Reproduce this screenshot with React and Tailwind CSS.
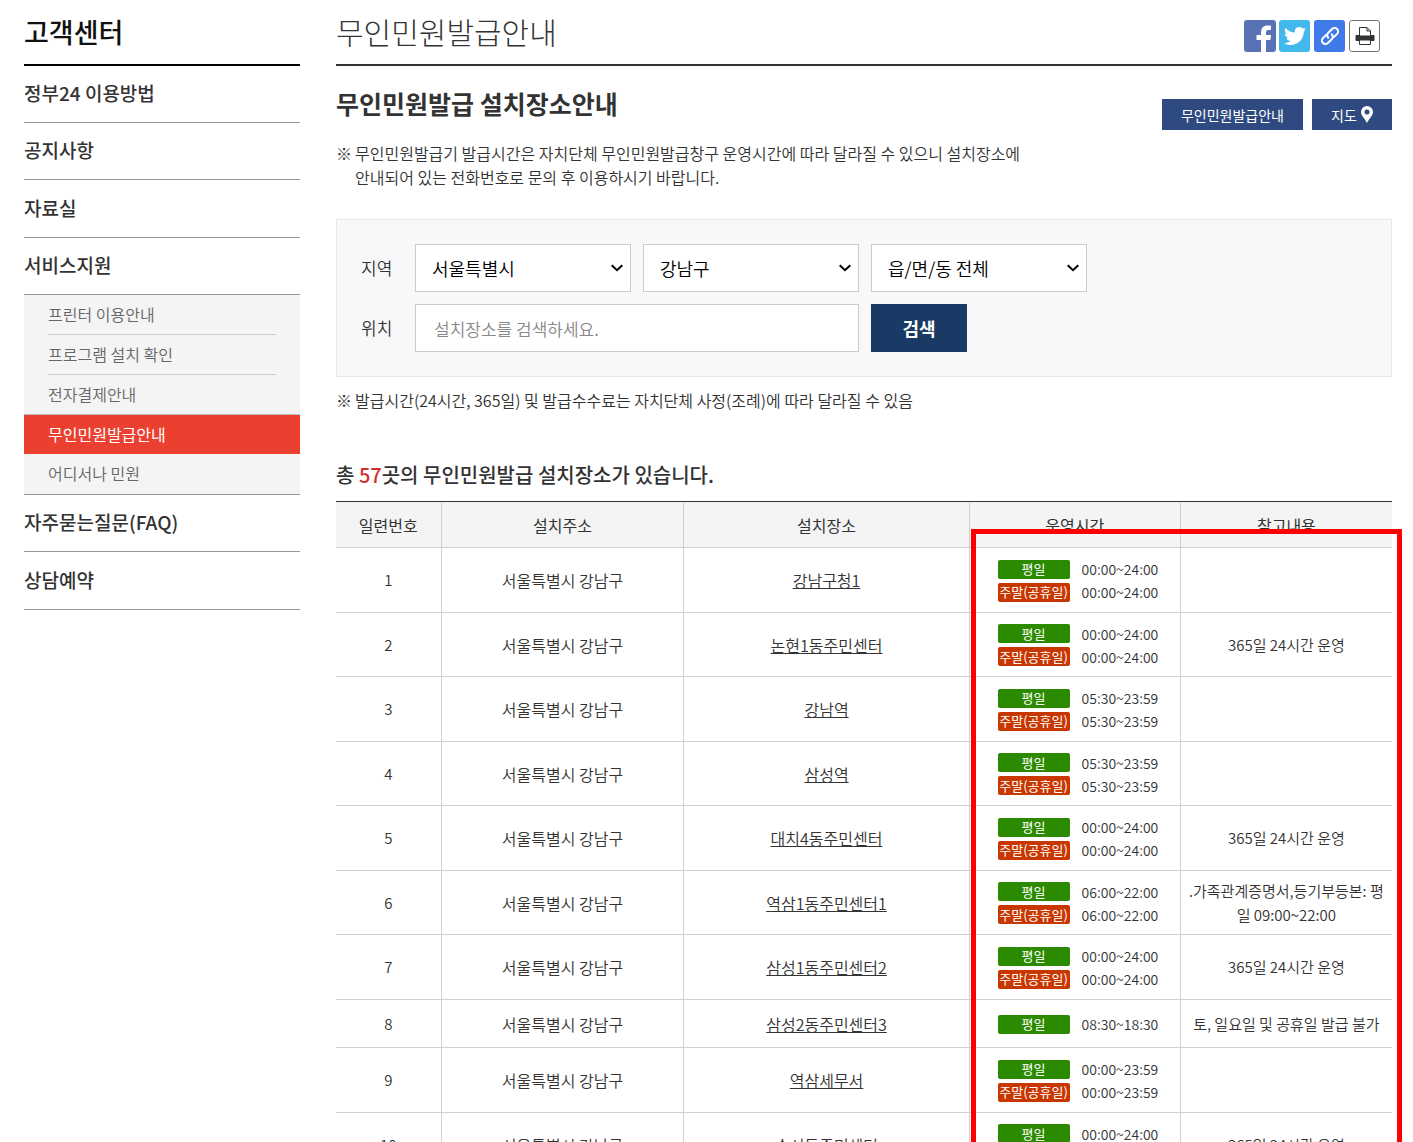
import React from 'react';
import { FaTwitter } from 'react-icons/fa';

const menu = [
    { label: '정부24 이용방법' },
    { label: '공지사항' },
    { label: '자료실' },
    {
        label: '서비스지원',
        children: ['프린터 이용안내', '프로그램 설치 확인', '전자결제안내', '무인민원발급안내', '어디서나 민원'],
    },
    { label: '자주묻는질문(FAQ)' },
    { label: '상담예약' },
];

const ADDRESS = '서울특별시 강남구';

const places = [
    { name: '강남구청1', weekday: '00:00~24:00', weekend: '00:00~24:00', note: '' },
    { name: '논현1동주민센터', weekday: '00:00~24:00', weekend: '00:00~24:00', note: '365일 24시간 운영' },
    { name: '강남역', weekday: '05:30~23:59', weekend: '05:30~23:59', note: '' },
    { name: '삼성역', weekday: '05:30~23:59', weekend: '05:30~23:59', note: '' },
    { name: '대치4동주민센터', weekday: '00:00~24:00', weekend: '00:00~24:00', note: '365일 24시간 운영' },
    { name: '역삼1동주민센터1', weekday: '06:00~22:00', weekend: '06:00~22:00', note: '.가족관계증명서,등기부등본: 평일 09:00~22:00' },
    { name: '삼성1동주민센터2', weekday: '00:00~24:00', weekend: '00:00~24:00', note: '365일 24시간 운영' },
    { name: '삼성2동주민센터3', weekday: '08:30~18:30', note: '토, 일요일 및 공휴일 발급 불가' },
    { name: '역삼세무서', weekday: '00:00~23:59', weekend: '00:00~23:59', note: '' },
    { name: '수서동주민센터', weekday: '00:00~24:00', weekend: '00:00~24:00', note: '365일 24시간 운영' },
];

function Sidebar() {
    return (
        <aside className="w-[276px] shrink-0">
            <h2 className="h-[66px] border-b-2 border-black pt-3 text-[27px] leading-10 font-medium text-[#111]">고객센터</h2>
            <ul>
                {menu.map((item) => (
                    <li key={item.label} className="[&:nth-child(3n)>a]:h-[58px]">
                        <a href="#" className="flex h-[57px] items-center border-b border-[#999] pb-0.5 text-[19px] font-medium">
                            {item.label}
                        </a>
                        {item.children && <SubMenu items={item.children} active="무인민원발급안내" />}
                    </li>
                ))}
            </ul>
        </aside>
    );
}

function SubMenu({ items, active }) {
    return (
        <ul className="border-b border-[#999] bg-[#f4f4f4] text-[#666]">
            {items.map((label) => (
                <li key={label} className="mx-6 h-10 border-b border-[#ccc] last:border-b-0">
                    {label === active ? (
                        <a href="#" aria-current="page" className="-mx-6 -mt-px flex h-10 items-center border-t border-[#bbb] bg-[#eb4030] px-6 pb-0.5 font-normal text-white">
                            {label}
                        </a>
                    ) : (
                        <a href="#" className="flex h-[39px] items-center pb-0.5">{label}</a>
                    )}
                </li>
            ))}
        </ul>
    );
}

function ShareButtons() {
    return (
        <div className="flex gap-[3px] pt-2 pr-3">
            <button type="button" aria-label="페이스북" className="size-8 overflow-hidden rounded-[3px] bg-[#5872b5]">
                <svg viewBox="0 0 32 32" className="size-8" fill="#fff">
                    <path d="M17 32V20h-4.500v-5H17v-2.500C17 8 19.500 5.500 23.500 5.500H27V10h-2.500C22.800 10 22 10.800 22 12.500V15h5l-.6 5H22v12z" />
                </svg>
            </button>
            <button type="button" aria-label="트위터" className="flex h-8 w-[31px] items-center justify-center rounded-[3px] bg-[#42b8ec] text-white">
                <FaTwitter size={22} />
            </button>
            <button type="button" aria-label="링크 복사" className="ml-px flex h-8 w-[31px] items-center justify-center rounded-[3px] bg-[#4079e8]">
                <svg viewBox="0 0 24 24" className="size-6" fill="none" stroke="#fff" strokeWidth="2" strokeLinecap="round">
                    <g transform="rotate(-45 12 12)">
                        <path d="M10 8.500H5.500a3.500 3.500 0 0 0 0 7H11a3.500 3.500 0 0 0 3.500-3.500" />
                        <path d="M14 15.500h4.500a3.500 3.500 0 0 0 0-7H13a3.500 3.500 0 0 0-3.500 3.500" />
                    </g>
                </svg>
            </button>
            <button type="button" aria-label="인쇄" className="ml-px flex h-8 w-[31px] items-center justify-center rounded-[3px] border border-[#777] bg-white">
                <svg viewBox="0 0 20 20" className="size-5" fill="#333">
                    <path d="M.5 10a1 1 0 0 1 1-1h17a1 1 0 0 1 1 1v4a1 1 0 0 1-1 1h-17a1 1 0 0 1-1-1z" />
                    <path d="M4.500 10V1.500H12L15.500 5v5z" fill="#fff" stroke="#333" />
                    <path d="M12 1.500V5h3.500" fill="none" stroke="#333" />
                    <path d="M4.500 14h11v4.500h-11z" fill="#fff" stroke="#333" />
                </svg>
            </button>
        </div>
    );
}

function Select({ id, label, value }) {
    return (
        <div className="relative w-[216px]">
            <select
                id={id}
                aria-label={label}
                defaultValue={value}
                className="h-12 w-full appearance-none border border-[#ccc] bg-white px-4 text-[18px] text-black"
            >
                <option>{value}</option>
            </select>
            <svg viewBox="0 0 12 8" className="pointer-events-none absolute top-5 right-2 h-2 w-3" fill="none" stroke="#000" strokeWidth="2">
                <path d="M.7 1.200 6 6.200l5.300-5" />
            </svg>
        </div>
    );
}

function SearchBox() {
    return (
        <form className="mt-[30px] flex flex-col gap-3 border border-[#e5e5e8] bg-[#f8f8fa] p-6" onSubmit={(e) => e.preventDefault()}>
            <div className="flex items-center gap-3">
                <label htmlFor="sido" className="w-[42px] text-[17px]">지역</label>
                <Select id="sido" value="서울특별시" />
                <Select id="sigungu" label="시/군/구" value="강남구" />
                <Select id="dong" label="읍/면/동" value="읍/면/동 전체" />
            </div>
            <div className="flex items-center gap-3">
                <label htmlFor="keyword" className="w-[42px] text-[17px]">위치</label>
                <input
                    id="keyword"
                    type="text"
                    placeholder="설치장소를 검색하세요."
                    className="h-12 w-[444px] border border-[#ccc] bg-white px-[18px] text-[17px] placeholder:text-[#888]"
                />
                <button type="submit" className="h-12 w-24 bg-[#183a64] text-[18px] font-bold text-white">검색</button>
            </div>
        </form>
    );
}

function Hours({ label, color, time }) {
    return (
        <div className="flex h-[19px] items-center gap-3">
            <span className={`flex h-[19px] w-[72px] items-center justify-center rounded-[2px] text-[13px] font-normal text-white ${color}`}>
                {label}
            </span>
            <span className="text-[14px]">{time}</span>
        </div>
    );
}

function PlaceTable() {
    return (
        <div className="relative mt-[11px]">
            <table className="w-full table-fixed border-separate border-spacing-0 border-t border-[#333] text-center">
                <colgroup>
                    <col className="w-[10%]" />
                    <col className="w-[23%]" />
                    <col className="w-[27%]" />
                    <col className="w-[20%]" />
                    <col className="w-[20%]" />
                </colgroup>
                <thead>
                    <tr className="h-[46px] bg-[#f4f4f4] *:border-r *:border-b *:border-[#d0d0d0] *:font-normal *:last:border-r-0">
                        <th scope="col">일련번호</th>
                        <th scope="col">설치주소</th>
                        <th scope="col">설치장소</th>
                        <th scope="col">운영시간</th>
                        <th scope="col">참고내용</th>
                    </tr>
                </thead>
                <tbody>
                    {places.map((place, i) => (
                        <tr
                            key={place.name}
                            className={`*:border-r *:border-b *:border-[#d0d0d0] *:last:border-r-0 ${place.weekend ? 'odd:h-[65px] even:h-16' : 'h-12'}`}
                        >
                            <td className="text-[15px]">{i + 1}</td>
                            <td>{ADDRESS}</td>
                            <td>
                                <a href="#" className="underline">{place.name}</a>
                            </td>
                            <td>
                                <div className="flex flex-col gap-1 pt-px pl-7">
                                    <Hours label="평일" color="bg-[#2b8a00]" time={place.weekday} />
                                    {place.weekend && <Hours label="주말(공휴일)" color="bg-[#c83700]" time={place.weekend} />}
                                </div>
                            </td>
                            <td className="px-1 text-[15px] leading-6">{place.note}</td>
                        </tr>
                    ))}
                </tbody>
            </table>
            {/* highlight over the hours and note columns */}
            <div className="pointer-events-none absolute top-7 -right-[10px] -bottom-2 left-[60%] ml-px border-5 border-[#f00]" />
        </div>
    );
}

export default function App() {
    return (
        <div className="flex gap-9 bg-white pr-[21px] pl-6 font-['Noto_Sans_CJK_KR','Noto_Sans',sans-serif] text-[16px] leading-6 font-[350] text-[#333]">
            <Sidebar />
            <main className="min-w-0 flex-1">
                <header className="flex h-[66px] items-center justify-between border-b-2 border-[#333]">
                    <h1 className="pb-0.5 text-[30px] leading-10 font-light">무인민원발급안내</h1>
                    <ShareButtons />
                </header>

                <div className="flex justify-between pt-5">
                    <h2 className="text-[25px] leading-[34px] font-bold">무인민원발급 설치장소안내</h2>
                    <div className="flex gap-[9px] pt-[13px] text-[14px] font-normal text-white">
                        <a href="#" className="flex h-[31px] items-center bg-[#2f4a80] px-[19px]">무인민원발급안내</a>
                        <a href="#" className="flex h-[31px] w-20 items-center justify-center gap-1 bg-[#2f4a80]">
                            지도
                            <svg viewBox="0 0 12 17" className="h-[17px] w-3" fill="#fff" fillRule="evenodd">
                                <path d="M6 0a6 6 0 0 0-6 6c0 4 4 6.500 6 11 2-4.500 6-7 6-11a6 6 0 0 0-6-6zm0 3.500a2.500 2.500 0 1 1 0 5 2.500 2.500 0 0 1 0-5z" />
                            </svg>
                        </a>
                    </div>
                </div>

                <p className="mt-[11px] flex gap-[3px]">
                    <span>※</span>
                    <span>
                        무인민원발급기 발급시간은 자치단체 무인민원발급창구 운영시간에 따라 달라질 수 있으니 설치장소에
                        <br />
                        안내되어 있는 전화번호로 문의 후 이용하시기 바랍니다.
                    </span>
                </p>

                <SearchBox />

                <p className="mt-[11px] flex gap-[3px]">
                    <span>※</span>
                    <span>발급시간(24시간, 365일) 및 발급수수료는 자치단체 사정(조례)에 따라 달라질 수 있음</span>
                </p>

                <h3 className="mt-12 text-[20px] leading-[30px] font-medium">
                    총 <strong className="font-medium text-[#d2322d]">57</strong>곳의 무인민원발급 설치장소가 있습니다.
                </h3>
                <PlaceTable />
            </main>
        </div>
    );
}
